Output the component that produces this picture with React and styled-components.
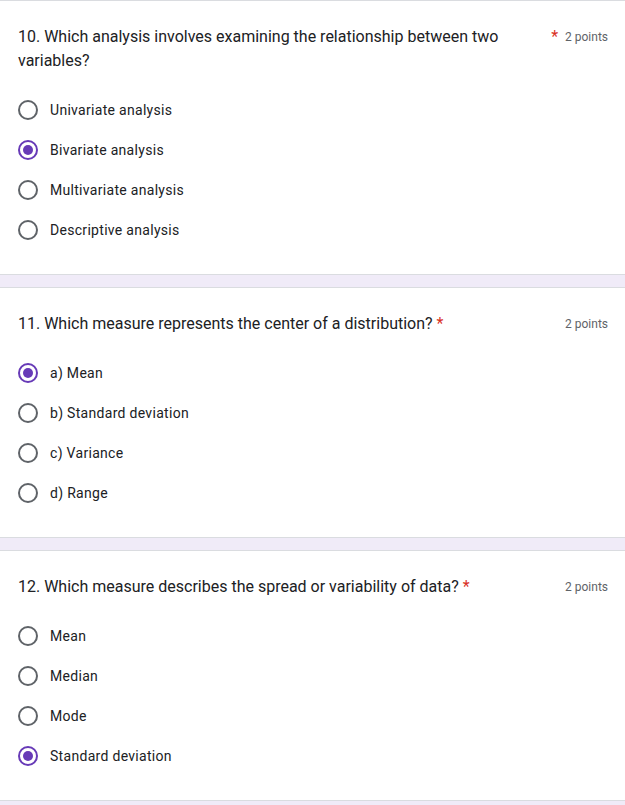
import React from 'react'
import styled, { createGlobalStyle } from 'styled-components'

const GlobalStyle = createGlobalStyle`
  body {
    margin: 0;
    background: #f0ebf8;
    font-family: Roboto, "Liberation Sans", Arial, sans-serif;
    color: #202124;
  }
`

const Page = styled.div`
  display: flex;
  flex-direction: column;
  gap: 12px;
  width: 625px;
`

const Card = styled.section`
  background: #fff;
  border-top: 1px solid #dadce0;
  border-bottom: 1px solid #dadce0;
  padding: 24px 17px 24px 18px;
`

const Header = styled.div`
  display: flex;
  align-items: flex-start;
  margin-bottom: 17px;
`

const Title = styled.div`
  flex: 0 1 auto;
  font-size: 16px;
  line-height: 24px;
  letter-spacing: 0;
  color: #202124;
`

const Star = styled.span`
  flex: none;
  padding-left: 4px;
  font-size: 16px;
  line-height: 24px;
  color: #d93025;
`

const Points = styled.span`
  flex: none;
  margin-left: auto;
  padding-left: 7px;
  font-size: 12px;
  line-height: 24px;
  color: #5f6368;
  white-space: nowrap;
`

const Options = styled.div`
  display: flex;
  flex-direction: column;
`

const Option = styled.label`
  display: flex;
  align-items: center;
  gap: 12px;
  height: 40px;
  font-size: 14px;
  letter-spacing: 0.3px;
  color: #202124;
`

const Radio = styled.span`
  box-sizing: border-box;
  width: 20px;
  height: 20px;
  border-radius: 50%;
  border: 2px solid ${p => (p.checked ? '#673ab7' : '#5f6368')};
  display: flex;
  align-items: center;
  justify-content: center;
  flex: none;
  &::after {
    content: '';
    width: 10px;
    height: 10px;
    border-radius: 50%;
    background: #673ab7;
    display: ${p => (p.checked ? 'block' : 'none')};
  }
`

const questions = [
  {
    title: '10. Which analysis involves examining the relationship between two variables?',
    options: ['Univariate analysis', 'Bivariate analysis', 'Multivariate analysis', 'Descriptive analysis'],
    answer: 1,
  },
  {
    title: '11. Which measure represents the center of a distribution?',
    options: ['a) Mean', 'b) Standard deviation', 'c) Variance', 'd) Range'],
    answer: 0,
  },
  {
    title: '12. Which measure describes the spread or variability of data?',
    options: ['Mean', 'Median', 'Mode', 'Standard deviation'],
    answer: 3,
  },
]

function Question({ q }) {
  return (
    <Card>
      <Header>
        <Title>{q.title}</Title>
        <Star>*</Star>
        <Points>2 points</Points>
      </Header>
      <Options>
        {q.options.map((o, i) => (
          <Option key={o}>
            <Radio checked={i === q.answer} />
            {o}
          </Option>
        ))}
      </Options>
    </Card>
  )
}

export default function App() {
  return (
    <>
      <GlobalStyle />
      <Page>
        {questions.map(q => (
          <Question key={q.title} q={q} />
        ))}
      </Page>
    </>
  )
}
